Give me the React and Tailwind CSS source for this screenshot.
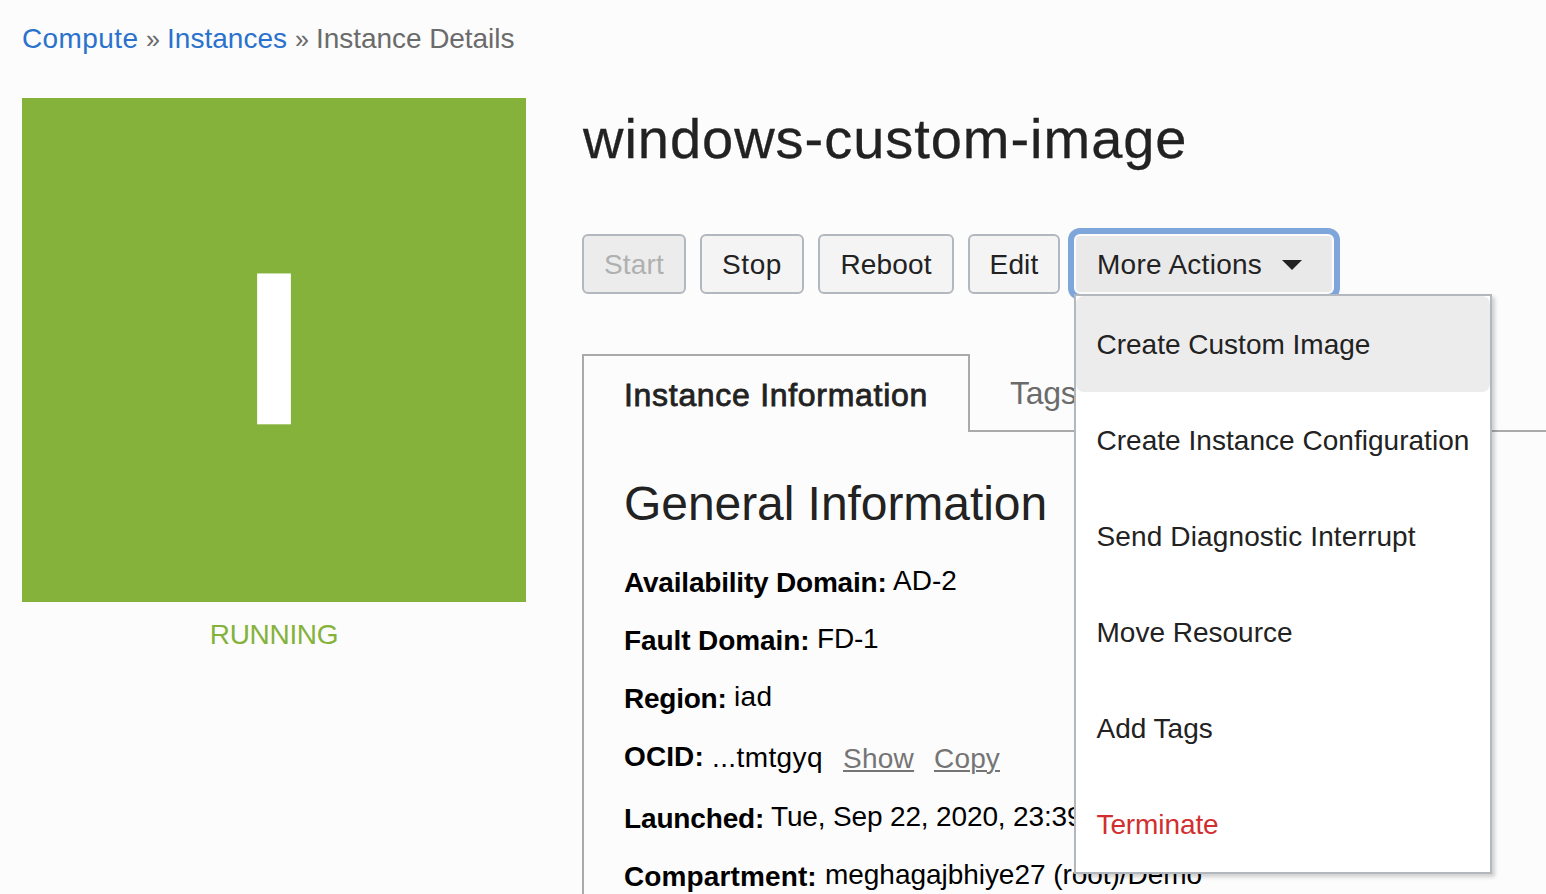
const actions = [
  { label: 'Create Custom Image', style: 'text-[#222] bg-[#ececec] rounded-lg' },
  { label: 'Create Instance Configuration', style: 'tracking-[0.03px] text-[#222]' },
  { label: 'Send Diagnostic Interrupt', style: 'tracking-[0.13px] text-[#222]' },
  { label: 'Move Resource', style: 'text-[#222]' },
  { label: 'Add Tags', style: 'text-[#222]' },
  { label: 'Terminate', style: 'tracking-[-0.1px] text-[#d12f2f]' },
];

const details = [
  { label: 'Availability Domain:', labelStyle: 'w-[269px] tracking-[-0.2px]', value: 'AD-2', valueStyle: '-mt-0.5' },
  { label: 'Fault Domain:', labelStyle: 'w-[193px] tracking-[-0.1px]', value: 'FD-1', valueStyle: '-mt-0.5 tracking-[-0.2px]' },
  { label: 'Region:', labelStyle: 'w-[110px] tracking-[-0.25px]', value: 'iad', valueStyle: '-mt-0.5 tracking-[0.3px]' },
  { label: 'OCID:', labelStyle: 'w-[88px] tracking-[0.1px]', value: '...tmtgyq', valueStyle: 'mt-px w-[131px] tracking-[0.4px]', links: true },
  { label: 'Launched:', labelStyle: 'w-[147px] tracking-[-0.15px]', value: 'Tue, Sep 22, 2020, 23:39', valueStyle: '-mt-0.5 tracking-[-0.15px]' },
  { label: 'Compartment:', labelStyle: 'w-[201px] tracking-[0.12px]', value: 'meghagajbhiye27 (root)/Demo', valueStyle: '-mt-0.5 tracking-[-0.04px]' },
];

const buttonBase = 'flex h-[60px] items-center justify-center rounded-md border-2 border-[#b3b8bf] pt-px';

function Breadcrumb() {
  return (
    <nav className="flex h-[98px] pt-[19px] pl-[22px] leading-10 text-[#6b6b6b]">
      <a className="w-[124px] tracking-[0.4px] text-[#2a72cc]">Compute</a>
      <span className="w-[21px] text-[25px]">»</span>
      <a className="w-[128px] tracking-[0.03px] text-[#2a72cc]">Instances</a>
      <span className="w-[21px] text-[25px]">»</span>
      <span className="tracking-[-0.05px]">Instance Details</span>
    </nav>
  );
}

function MoreActions() {
  return (
    <div className="relative">
      <button className="flex h-[60px] w-[260px] items-center rounded-md border-2 border-[#fcfcfc] bg-[#e9e9e9] pt-px pl-[21px] tracking-[0.27px] shadow-[0_0_0_6px_#7ea6db]">
        More Actions
        <svg className="mt-px ml-[20px] h-[10px] w-[20px]" viewBox="0 0 20 10">
          <path d="M0 0H20L10 10Z" fill="#222" />
        </svg>
      </button>
      <ul className="absolute top-[60px] left-0 z-10 w-[418px] border-2 border-[#b3b8bf] bg-white shadow-[3px_3px_4px_rgba(0,0,0,0.18)]">
        {actions.map((a) => (
          <li key={a.label} className={`flex h-24 items-center pt-0.5 pl-[20.5px] whitespace-nowrap ${a.style}`}>
            {a.label}
          </li>
        ))}
      </ul>
    </div>
  );
}

export default function App() {
  return (
    <div className="h-[894px] w-full overflow-hidden bg-[#fcfcfc] font-['Liberation_Sans',Arial,sans-serif] text-[28px] whitespace-nowrap text-[#222]">
      <Breadcrumb />
      <main className="flex gap-[56px] pl-[22px]">
        <aside className="w-[504px] shrink-0 text-center">
          <div className="flex h-[504px] items-center justify-center bg-[#85b23b] pb-[5px] text-[216px] leading-none font-bold text-white [-webkit-text-stroke:2.6px_white]">
            I
          </div>
          <p className="mt-[13px] leading-10 tracking-[-0.33px] text-[#85b23b]">RUNNING</p>
        </aside>
        <section className="min-w-0 flex-1">
          <h1 className="mt-[9px] h-16 pl-px text-[56px] leading-16 tracking-[0.97px] [-webkit-text-stroke:0.3px_#222]">windows-custom-image</h1>
          <div className="mt-[63px] flex gap-[14px]">
            <button className={`${buttonBase} w-[104px] bg-[#ececec] tracking-[0.2px] text-[#b0b0b0]`}>Start</button>
            <button className={`${buttonBase} w-[104px] bg-[#f4f4f4] tracking-[0.6px]`}>Stop</button>
            <button className={`${buttonBase} w-[136px] bg-[#f4f4f4] tracking-[0.15px]`}>Reboot</button>
            <button className={`${buttonBase} w-[92px] bg-[#f4f4f4] tracking-[0.15px]`}>Edit</button>
            <MoreActions />
          </div>
          <div className="mt-[60px] flex h-[78px] text-[32px] leading-10">
            <div className="w-[388px] border-2 border-b-0 border-[#aaa] pt-[19px] pl-[40px] tracking-[0.7px] [-webkit-text-stroke:0.8px_#222]">
              Instance Information
            </div>
            <div className="flex-1 border-b-2 border-[#aaa] pt-[19px] pl-[40px] tracking-[-0.3px] text-[#6b6b6b]">Tags</div>
          </div>
          <div className="h-[462px] border-l-2 border-[#aaa] pl-[40px] text-black">
            <h2 className="pt-[44px] text-[48px] leading-[56px] tracking-[-0.06px] text-[#222]">General Information</h2>
            <dl className="mt-[31px] leading-10">
              {details.map((d) => (
                <div key={d.label} className={`flex items-start ${d.links ? 'h-[62px]' : 'h-[58px]'}`}>
                  <dt className={`shrink-0 font-bold ${d.labelStyle}`}>{d.label}</dt>
                  <dd className={`shrink-0 ${d.valueStyle}`}>{d.value}</dd>
                  {d.links && (
                    <dd className="mt-0.5 flex gap-[20px] text-[#757575] underline decoration-2 underline-offset-[2px]">
                      <a className="tracking-[0.25px]">Show</a>
                      <a className="tracking-[0.15px]">Copy</a>
                    </dd>
                  )}
                </div>
              ))}
            </dl>
          </div>
        </section>
      </main>
    </div>
  );
}
